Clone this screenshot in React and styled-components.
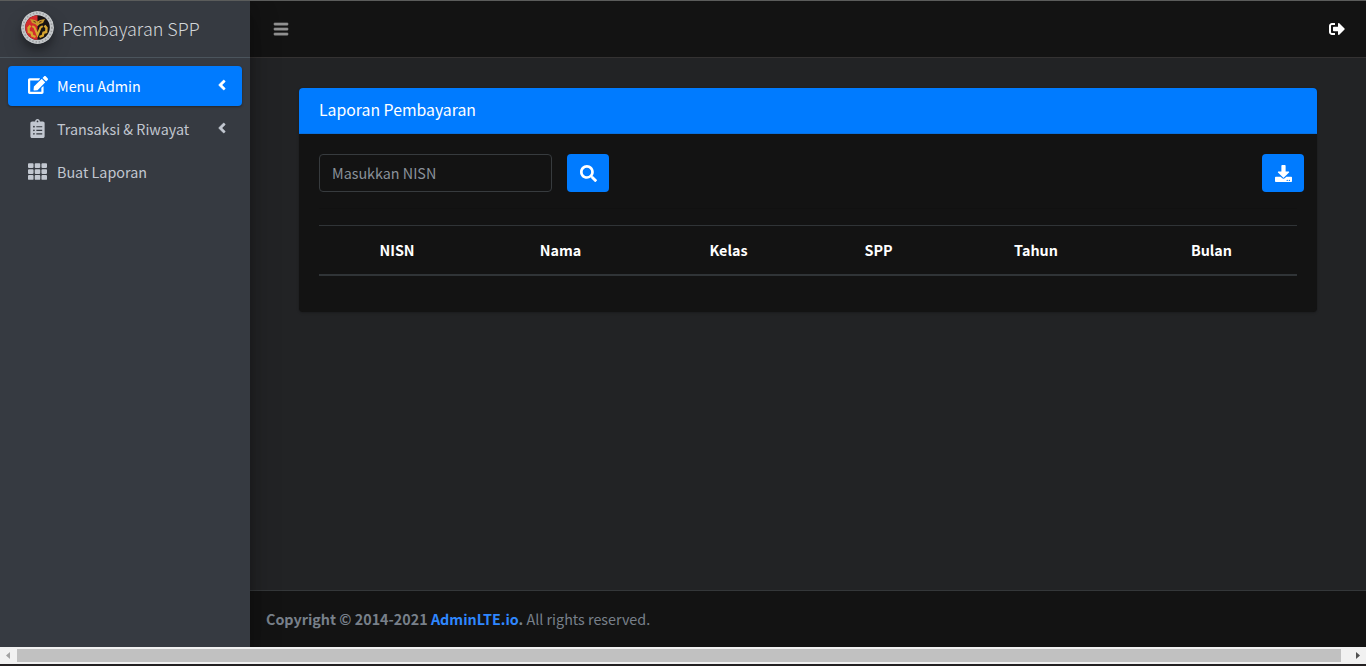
import React from "react";
import styled, { createGlobalStyle } from "styled-components";
import {
  FaEdit,
  FaClipboardList,
  FaTh,
  FaAngleLeft,
  FaBars,
  FaSignOutAlt,
  FaSearch,
  FaDownload,
} from "react-icons/fa";

const GlobalStyle = createGlobalStyle`
  *, *::before, *::after { box-sizing: border-box; }
  html, body { margin: 0; height: 666px; overflow: hidden; background: #232021; }
  body {
    font-family: "Noto Sans CJK SC", "Noto Sans", sans-serif;
    font-size: 14.33px;
    line-height: 24px;
    color: #fff;
  }
  svg { display: block; }
`;

const Screen = styled.div`
  display: flex;
  flex-direction: column;
  width: 1366px;
  height: 666px;
  border-top: 1px solid #5b5c5b;
`;

const Wrapper = styled.div`
  display: flex;
  height: 646px;
`;

const Sidebar = styled.aside`
  width: 250px;
  flex: none;
  background: #363a41;
  box-shadow: 0 14px 28px rgba(0, 0, 0, 0.25), 0 10px 10px rgba(0, 0, 0, 0.22);
  z-index: 2;
  clip-path: inset(0 -60px 0 0);
`;

const Brand = styled.div`
  display: flex;
  align-items: center;
  height: 57px;
  padding: 0 0 3px 21px;
  gap: 8px;
  border-bottom: 1px solid #4b545c;
`;

const Logo = styled.svg`
  width: 33px;
  height: 33px;
  border-radius: 50%;
  box-shadow: 0 10px 20px rgba(0, 0, 0, 0.19), 0 6px 6px rgba(0, 0, 0, 0.23);
`;

const BrandText = styled.span`
  font-size: 17.95px;
  font-weight: 300;
  line-height: 30px;
  padding-top: 1px;
  color: #d3d6d9;
  white-space: nowrap;
`;

const Menu = styled.nav`
  display: flex;
  flex-direction: column;
  gap: 3px;
  padding: 8px;
`;

const MenuItem = styled.a`
  display: flex;
  align-items: center;
  height: 40px;
  padding: 0 12px 0 16px;
  border-radius: 4px;
  color: ${(p) => (p.$active ? "#fff" : "#c2c7d0")};
  background: ${(p) => (p.$active ? "#007bff" : "transparent")};
  box-shadow: ${(p) =>
    p.$active ? "0 1px 3px rgba(0,0,0,.12), 0 1px 2px rgba(0,0,0,.24)" : "none"};
`;

const MenuIcon = styled.span`
  display: flex;
  justify-content: center;
  width: 27px;
  margin-right: 6px;
  padding-bottom: 2px;
`;

const MenuLabel = styled.span`
  flex: 1;
  white-space: nowrap;
`;

const Arrow = styled(FaAngleLeft)`
  margin-bottom: 2px;
  stroke: currentColor;
  stroke-width: 14px;
`;

const Main = styled.div`
  display: flex;
  flex-direction: column;
  flex: 1;
  min-width: 0;
  background: #222325;
`;

const Navbar = styled.header`
  display: flex;
  justify-content: space-between;
  align-items: center;
  height: 57px;
  padding: 0 21px 0 23px;
  background: #131313;
  border-bottom: 1px solid #343232;
  color: #919191;
`;

const MenuToggle = styled(FaBars)`
  stroke: currentColor;
  stroke-width: 16px;
`;

const Logout = styled(FaSignOutAlt)`
  color: #fff;
`;

const Content = styled.main`
  flex: 1;
  padding: 30px 49px 0;
`;

const Card = styled.section`
  height: 224px;
  border-radius: 4px;
  background: #131313;
  box-shadow: 0 0 1px rgba(0, 0, 0, 0.125), 0 1px 3px rgba(0, 0, 0, 0.2);
  overflow: hidden;
`;

const CardHeader = styled.div`
  height: 46px;
  padding: 10px 20px;
  background: #007bff;
  border-bottom: 1px solid #0870df;
  font-size: 15.8px;
`;

const CardBody = styled.div`
  padding: 20px 20px 0;
`;

const Toolbar = styled.div`
  display: flex;
  gap: 15px;
  height: 55px;
  margin-right: -7px;
`;

const Input = styled.input`
  width: 233px;
  height: 38px;
  padding: 0 12px 1px;
  border: 1px solid #373b3e;
  border-radius: 4px;
  background: #131313;
  color: #fff;
  font: inherit;
  outline: none;
  &::placeholder { color: #8a919a; opacity: 1; }
`;

const Button = styled.button`
  display: flex;
  align-items: center;
  justify-content: center;
  width: 42px;
  height: 38px;
  padding: 0;
  border: 0;
  border-radius: 4px;
  background: #007bff;
  color: #fff;
  margin-left: ${(p) => (p.$end ? "auto" : "0")};
`;

const Divider = styled.hr`
  height: 1px;
  margin: -1px 0 16px;
  border: 0;
  background: #111;
`;

const Table = styled.table`
  width: 978px;
  table-layout: fixed;
  border-collapse: separate;
  border-spacing: 0;
`;

const HeadCell = styled.th`
  width: ${(p) => p.$w}px;
  height: 51px;
  padding: 0 0 1px;
  border-top: 1px solid #303437;
  border-bottom: 2px solid #303437;
  font-weight: 700;
  text-align: center;
`;

const Footer = styled.footer`
  height: 57px;
  padding: 16px;
  background: #131313;
  border-top: 1px solid #343739;
  color: #78808a;
  white-space: nowrap;
`;

const FooterLink = styled.a`
  color: #2f87ff;
`;

const ScrollBar = styled.div`
  display: flex;
  align-items: center;
  flex: none;
  height: 17px;
  background: #f1f1f1;
`;

const ScrollButton = styled.div`
  display: flex;
  width: ${(p) => p.$w}px;
  padding-left: ${(p) => p.$inset}px;
`;

const Thumb = styled.div`
  flex: 1;
  height: 13px;
  background: #c1c1c1;
`;

const ArrowGlyph = styled.svg`
  width: 4px;
  height: 7px;
  fill: ${(p) => p.$color};
`;

const columns = [
  ["NISN", 156],
  ["Nama", 171],
  ["Kelas", 165],
  ["SPP", 135],
  ["Tahun", 180],
  ["Bulan", 171],
];

function SchoolLogo() {
  return (
    <Logo viewBox="0 0 33 33">
      <circle cx="16.5" cy="16.5" r="16.5" fill="#c4c7c9" />
      <circle cx="16.5" cy="16.5" r="14.4" fill="none" stroke="#9b9ea1" strokeWidth="1.6" strokeDasharray="1.4 1.9" />
      <circle cx="16.5" cy="16.5" r="12.3" fill="#171313" />
      <path d="M16.5 4.2a12.3 12.3 0 0 0 0 24.6z" fill="#d42b2d" />
      <path d="M9 8l5 1 2.5 1.5L19 9l5-1-2 4-3.5 1.2-2 2-2-2L11 12z" fill="#c8982b" />
      <path d="M12.5 10.3l2.3 1M20.5 10.3l-2.3 1" stroke="#5d2a18" strokeWidth="1" />
      <g fill="none" stroke="#d6a52f" strokeWidth="2.1">
        <path d="M11.2 15.2l2.2 1.2 3.1 7.6 3.1-7.6 2.2-1.2" />
        <path d="M9.5 14.5l-2 2.5.3 4 2.7.8.7 2.8 3.3 1.4" strokeWidth="2.4" />
        <path d="M23.5 14.5l2 2.5-.3 4-2.7.8-.7 2.8-3.3 1.4" strokeWidth="2.4" />
      </g>
    </Logo>
  );
}

export default function App() {
  return (
    <>
      <GlobalStyle />
      <Screen>
        <Wrapper>
          <Sidebar>
            <Brand>
              <SchoolLogo />
              <BrandText>Pembayaran SPP</BrandText>
            </Brand>
            <Menu>
              <MenuItem $active>
                <MenuIcon><FaEdit size={20} /></MenuIcon>
                <MenuLabel>Menu Admin</MenuLabel>
                <Arrow size={16} />
              </MenuItem>
              <MenuItem>
                <MenuIcon><FaClipboardList size={19} /></MenuIcon>
                <MenuLabel>Transaksi &amp; Riwayat</MenuLabel>
                <Arrow size={16} />
              </MenuItem>
              <MenuItem>
                <MenuIcon><FaTh size={19} /></MenuIcon>
                <MenuLabel>Buat Laporan</MenuLabel>
              </MenuItem>
            </Menu>
          </Sidebar>
          <Main>
            <Navbar>
              <MenuToggle size={16} />
              <Logout size={16} />
            </Navbar>
            <Content>
              <Card>
                <CardHeader>Laporan Pembayaran</CardHeader>
                <CardBody>
                  <Toolbar>
                    <Input placeholder="Masukkan NISN" />
                    <Button><FaSearch size={17} /></Button>
                    <Button $end><FaDownload size={17} /></Button>
                  </Toolbar>
                  <Divider />
                  <Table>
                    <thead>
                      <tr>
                        {columns.map(([name, width]) => (
                          <HeadCell key={name} $w={width}>{name}</HeadCell>
                        ))}
                      </tr>
                    </thead>
                  </Table>
                </CardBody>
              </Card>
            </Content>
            <Footer>
              <strong>
                Copyright © 2014-2021 <FooterLink>AdminLTE.io</FooterLink>.
              </strong>{" "}
              All rights reserved.
            </Footer>
          </Main>
        </Wrapper>
        <ScrollBar>
          <ScrollButton $w={17} $inset={6}>
            <ArrowGlyph $color="#a3a3a3" viewBox="0 0 4 7"><path d="M4 0v7L0 3.5z" /></ArrowGlyph>
          </ScrollButton>
          <Thumb />
          <ScrollButton $w={25} $inset={15}>
            <ArrowGlyph $color="#505050" viewBox="0 0 4 7"><path d="M0 0v7l4-3.5z" /></ArrowGlyph>
          </ScrollButton>
        </ScrollBar>
      </Screen>
    </>
  );
}
